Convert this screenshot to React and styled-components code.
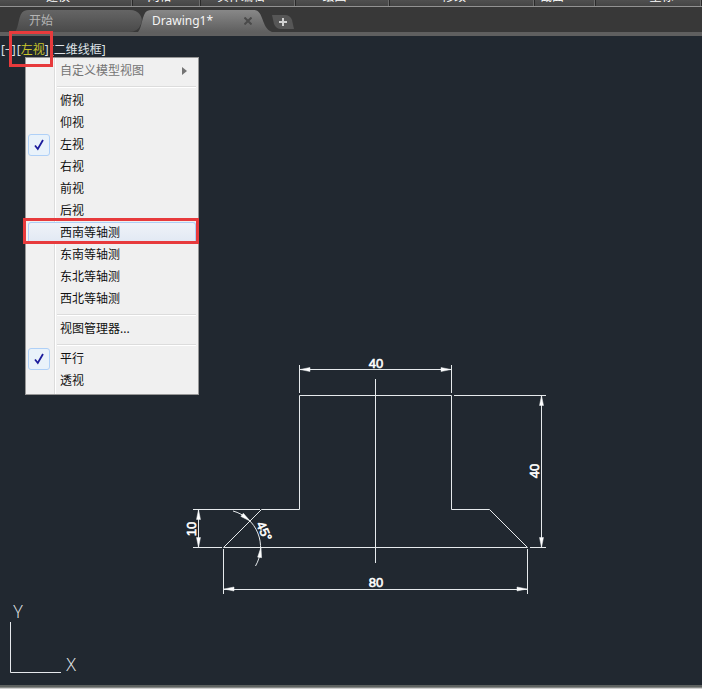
import React from "react";
import styled, { createGlobalStyle } from "styled-components";

const GlobalStyle = createGlobalStyle`
  *, *::before, *::after { box-sizing: border-box; }
  body {
    margin: 0;
    background: #212830;
    font: 12px/16px "Noto Sans", "Noto Sans CJK SC", sans-serif;
  }
  button { font: inherit; color: inherit; border: 0; padding: 0; background: none; }
`;

const Page = styled.div`
  min-height: 100vh;
  display: flex;
  flex-direction: column;
  overflow: hidden;
`;

const Ribbon = styled.div`
  display: flex;
  align-items: flex-end;
  height: 7px;
  overflow: hidden;
  background: linear-gradient(#505050, #454545);
  border-bottom: 1px solid #929292;
`;

const RibbonPanel = styled.div`
  flex: ${(p) => (p.$width ? `0 0 ${p.$width}px` : "1 0 0")};
  display: flex;
  justify-content: center;
  padding-right: ${(p) => p.$after || 0}px;
  padding-left: ${(p) => p.$before || 0}px;
  color: #fff;
  border-right: 1px solid #2a2a2a;
  box-shadow: inset -1px 0 #6c6c6c;
  white-space: nowrap;
  line-height: 18px;
`;

const TabBar = styled.div`
  display: flex;
  align-items: flex-end;
  height: 29px;
  padding-left: 15px;
  background: #383838;
  border-bottom: 4px solid #5f5f5f;
`;

const FileTab = styled.div`
  display: flex;
  align-items: center;
  justify-content: space-between;
  width: ${(p) => (p.$active ? 134 : 131)}px;
  height: 22px;
  margin-right: -8px;
  padding: 0 20px 0 14px;
  color: ${(p) => (p.$active ? "#f4f4f4" : "#b4b4b4")};
  background: ${(p) =>
    p.$active
      ? "linear-gradient(#888888, #5f5f5f)"
      : "linear-gradient(#656565, #4a4a4a)"};
  clip-path: ${(p) =>
    p.$active
      ? `path("M0 22 C4 18 4 4 9 1 Q11 0 14 0 H116 C126 0 123 18 134 22 Z")`
      : `path("M0 22 C4 18 3 4 9 1 Q11 0 14 0 H115 C124 0 129 8 126 14 Q123 22 114 22 Z")`};
`;

const IconButton = styled.button`
  display: flex;
  align-items: center;
  justify-content: center;
`;

const AddTab = styled(IconButton)`
  width: 22px;
  height: 14px;
  margin: 0 0 3px 8px;
  color: #d0d0d0;
  background: #565656;
  clip-path: path("M0 0 H13 Q18 0 20 5 L22 14 H9 Q4 14 2 9 Z");
`;

const Viewport = styled.main`
  position: relative;
  flex: 1;
  min-height: 600px;
  background: #212830;
`;

const ViewControls = styled.div`
  display: flex;
  padding: 5px 0 0 1px;
  color: #dfe3e8;
  line-height: 18px;
`;

const ViewControl = styled.button`
  display: flex;
  margin-right: ${(p) => p.$gap || 0}px;
`;

const CurrentView = styled.span`
  color: #c9c52c;
`;

const Menu = styled.div`
  position: absolute;
  left: 25px;
  top: 21px;
  width: 174px;
  padding: 2px;
  color: #111;
  border: 1px solid #979797;
  background: linear-gradient(
    to right,
    #f1f1f1 28px,
    #dcdcdc 28px,
    #dcdcdc 29px,
    #fff 29px,
    #fff 30px,
    #f0f0f0 30px
  );
`;

const MenuItem = styled.button`
  display: grid;
  grid-template-columns: 22px 1fr 14px;
  column-gap: 10px;
  align-items: center;
  width: 100%;
  height: 22px;
  text-align: left;
  line-height: 20px;
  border-radius: 3px;
  color: ${(p) => (p.$muted ? "#747474" : "inherit")};
  background: ${(p) => (p.$hot ? "linear-gradient(#f0f3f8, #e0e8f3)" : "none")};
  box-shadow: ${(p) => (p.$hot ? "inset 0 0 0 1px #aecff7" : "none")};
`;

const MenuLabel = styled.span`
  white-space: nowrap;
`;

const CheckSlot = styled.span`
  display: flex;
  align-items: center;
  justify-content: center;
  height: 22px;
  border-radius: 3px;
  border: ${(p) => (p.$on ? "1px solid #afd0f7" : "0")};
  background: ${(p) => (p.$on ? "#e9f2fa" : "none")};
`;

const MenuRule = styled.hr`
  height: 2px;
  margin: 4px 0 2px 29px;
  border: 0;
  border-top: 1px solid #dcdcdc;
  border-bottom: 1px solid #fff;
`;

const Drawing = styled.svg`
  position: absolute;
  left: 180px;
  top: 314px;
  fill: none;
  stroke: #e6eaec;
  text {
    font: 13px "Liberation Sans", sans-serif;
    fill: #fff;
    stroke: #fff;
    stroke-width: 0.6px;
    text-anchor: middle;
  }
`;

const AxisIcon = styled.svg`
  position: absolute;
  left: 0;
  bottom: 5px;
  fill: none;
  stroke: #e6e9ec;
  text {
    font: 300 18px "Open Sans", "Liberation Sans", sans-serif;
    fill: #e6e9ec;
    stroke: none;
    text-anchor: middle;
  }
`;

const Highlight = styled.div`
  position: absolute;
  left: ${(p) => p.$x}px;
  top: ${(p) => p.$y}px;
  width: ${(p) => p.$w}px;
  height: ${(p) => p.$h}px;
  border: 3px solid #e73a3c;
  pointer-events: none;
`;

const StatusEdge = styled.footer`
  height: 4px;
  background: #d0d0cf;
  border-top: 2px solid #5d615f;
  box-shadow: inset 0 1px #858886;
`;

const panels = [
  { name: "建模", width: 133, after: 16 },
  { name: "网格", width: 68, after: 14 },
  { name: "实体编辑", width: 95, after: 14 },
  { name: "绘图", width: 94, after: 16 },
  { name: "修改", width: 145, after: 16 },
  { name: "截面", width: 61, after: 26 },
  { name: "坐标", before: 26 },
];

const menu = [
  [{ label: "自定义模型视图", submenu: true }],
  [
    { label: "俯视" },
    { label: "仰视" },
    { label: "左视", checked: true },
    { label: "右视" },
    { label: "前视" },
    { label: "后视" },
    { label: "西南等轴测", hot: true },
    { label: "东南等轴测" },
    { label: "东北等轴测" },
    { label: "西北等轴测" },
  ],
  [{ label: "视图管理器..." }],
  [{ label: "平行", checked: true }, { label: "透视" }],
];

// Dimension arrowhead whose tip is at (x, y), pointing along `angle` degrees.
function Arrow({ x, y, angle }) {
  return (
    <path
      d="M0 0 L-10 -2 V2 Z"
      fill="#fff"
      strokeWidth="0.5"
      transform={`translate(${x} ${y}) rotate(${angle})`}
    />
  );
}

function PartDrawing() {
  return (
    <Drawing width="380" height="260" viewBox="180 350 380 260" role="img" aria-label="零件视图">
      <path d="M223.5 547.5 L261.5 509.5 H299.5 V395.5 H451.5 V509.5 H489.5 L527.5 547.5 Z" />
      <path d="M375.5 379 V563" />
      <path d="M299.5 365 V393 M451.5 365 V393 M299.5 369.5 H451.5" />
      <Arrow x={300} y={369.5} angle={180} />
      <Arrow x={451} y={369.5} angle={0} />
      <path d="M454 395.5 H546 M530 547.5 H546 M541.5 395.5 V547.5" />
      <Arrow x={541.5} y={395.5} angle={-90} />
      <Arrow x={541.5} y={547.5} angle={90} />
      <path d="M193 509.5 H260 M193 547.5 H222 M198.5 509.5 V547.5" />
      <Arrow x={198.5} y={509.5} angle={-90} />
      <Arrow x={198.5} y={547.5} angle={90} />
      <path d="M223.5 549 V594 M527.5 549 V594 M223.5 589.5 H527.5" />
      <Arrow x={224} y={589} angle={180} />
      <Arrow x={527} y={589} angle={0} />
      <path d="M233 511 A37.5 37.5 0 0 1 255.5 566" />
      <Arrow x={250} y={521} angle={38} />
      <Arrow x={261} y={547.5} angle={-82} />
      <text x="376" y="368">40</text>
      <text x="376" y="587">80</text>
      <text transform="translate(539 471) rotate(-90)">40</text>
      <text transform="translate(196 529) rotate(-90)">10</text>
      <text transform="translate(260 533) rotate(66)">45°</text>
    </Drawing>
  );
}

export default function App() {
  return (
    <Page>
      <GlobalStyle />
      <Ribbon>
        {panels.map((p) => (
          <RibbonPanel key={p.name} $width={p.width} $after={p.after} $before={p.before}>
            {p.name}
          </RibbonPanel>
        ))}
      </Ribbon>
      <TabBar>
        <FileTab>
          <button>开始</button>
        </FileTab>
        <FileTab $active>
          <button>Drawing1*</button>
          <IconButton aria-label="关闭">
            <svg width="8" height="8" viewBox="0 0 8 8" stroke="#4a4a4a" strokeWidth="2">
              <path d="M0.5 0.5 L7.5 7.5 M7.5 0.5 L0.5 7.5" />
            </svg>
          </IconButton>
        </FileTab>
        <AddTab aria-label="新建">
          <svg width="8" height="8" viewBox="0 0 8 8" stroke="currentColor" strokeWidth="2">
            <path d="M4 0 V8 M0 4 H8" />
          </svg>
        </AddTab>
      </TabBar>
      <Viewport>
        <ViewControls>
          <ViewControl $gap={1}>[−]</ViewControl>
          <ViewControl $gap={1}>
            [<CurrentView>左视</CurrentView>]
          </ViewControl>
          <ViewControl>[二维线框]</ViewControl>
        </ViewControls>
        <PartDrawing />
        <AxisIcon width="90" height="84" viewBox="0 596 90 84" role="img" aria-label="坐标轴">
          <path d="M10.5 622 V672.5 H61" />
          <text x="18" y="618">Y</text>
          <text x="71" y="671">X</text>
        </AxisIcon>
        <Menu role="menu">
          {menu.map((group, i) => (
            <React.Fragment key={i}>
              {i > 0 && <MenuRule />}
              {group.map((item) => (
                <MenuItem
                  key={item.label}
                  role={item.checked ? "menuitemcheckbox" : "menuitem"}
                  aria-checked={item.checked}
                  $hot={item.hot}
                  $muted={item.submenu}
                >
                  <CheckSlot $on={item.checked}>
                    {item.checked && (
                      <svg width="10" height="12" viewBox="0 0 10 12" fill="none" stroke="#1c1c9c">
                        <path d="M1 6.5 L3.8 10 L9 1" strokeWidth="1.8" />
                      </svg>
                    )}
                  </CheckSlot>
                  <MenuLabel>{item.label}</MenuLabel>
                  {item.submenu && (
                    <svg width="5" height="8" viewBox="0 0 5 8" fill="#747474">
                      <path d="M0 0 L5 4 L0 8 Z" />
                    </svg>
                  )}
                </MenuItem>
              ))}
            </React.Fragment>
          ))}
        </Menu>
        <Highlight $x={9} $y={-5} $w={44} $h={36} />
        <Highlight $x={23} $y={182} $w={176} $h={26} />
      </Viewport>
      <StatusEdge />
    </Page>
  );
}
